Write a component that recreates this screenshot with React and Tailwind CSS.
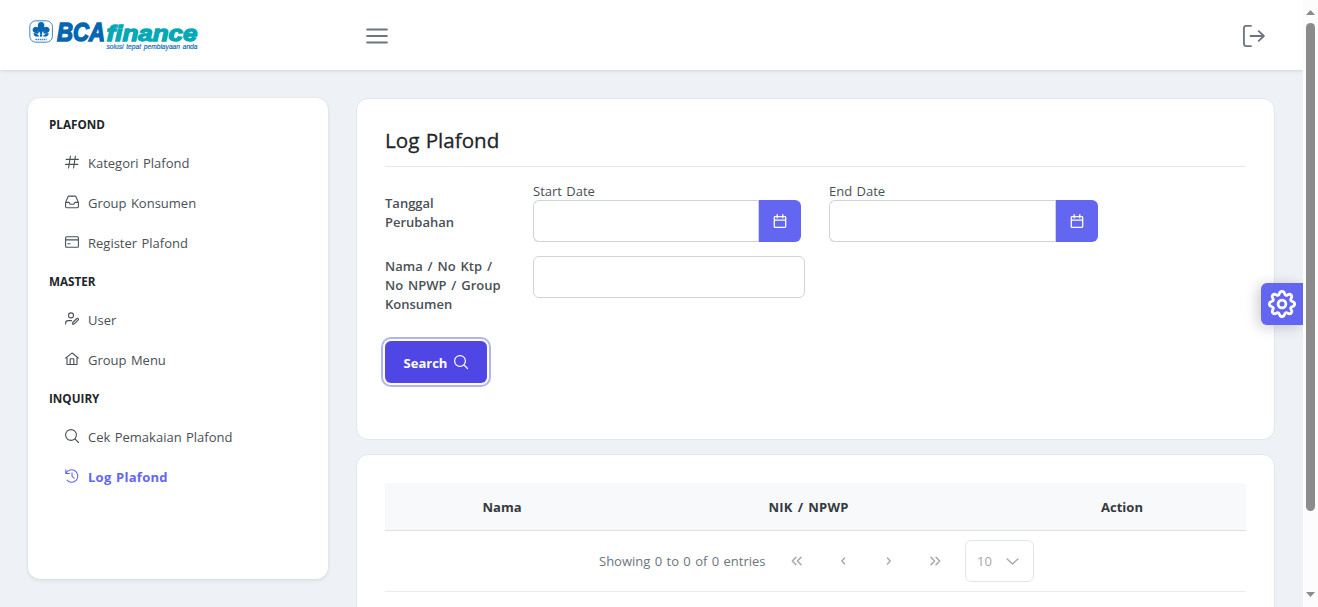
import React from "react";

const ICONS = {
  hash: <path d="M5.4 1 3.6 13M10.4 1 8.6 13M1.2 4.4h12.2M.6 9.4h12.2" />,
  inbox: <path d="M.6 7.4 3 1.7q.3-.6 1-.6h6q.7 0 1 .6l2.4 5.7v4.4q0 .9-.9.9h-11q-.9 0-.9-.9zM.6 7.4h3.6l1 1.9h3.6l1-1.9h3.6" />,
  card: <path d="M1.6 1.8h10.8q1 0 1 1v8.4q0 1-1 1H1.6q-1 0-1-1V2.8q0-1 1-1zM.6 4.9h12.8M2.9 8.8h2.2" />,
  userEdit: (
    <>
      <circle cx="6" cy="3.4" r="2.5" />
      <path d="M.6 12v-.8q0-2.6 2.6-2.6h3.3M7.6 12.3l.2-1.8 4-4q.6-.5 1.2 0l.3.3q.5.6 0 1.1l-4 4z" />
    </>
  ),
  home: <path d="M.6 6.2 6.5 1.3q.5-.4 1 0l5.9 4.9M2 5.3v7.2h10V5.3M5.2 12.3V7.2q0-.5.5-.5h2.6q.5 0 .5.5v5.1" />,
  search: (
    <>
      <circle cx="6" cy="6" r="5.4" />
      <path d="m9.9 9.9 3.6 3.6" />
    </>
  ),
  history: <path d="M.8.8v3.7h3.7M1 4.3A6.2 6.2 0 1 1 2 11.2M7 3.8v3.4l2.1 2" />,
  calendar: <path d="M2.1 2.6h9.8q.8 0 .8.8v9.2q0 .8-.8.8H2.1q-.8 0-.8-.8V3.4q0-.8.8-.8zM1.3 6.2h11.4M4.2.6v3.2M9.8.6v3.2" />,
  signOut: <path d="M5.1.6H2Q.6.6.6 2v10q0 1.4 1.4 1.4h3.1M4.8 7h8.5M10 3.9 13.3 7 10 10.1" />,
  bars: <path d="M.7 2.86h12.6M.7 7h12.6M.7 11.14h12.6" />,
  left: <path d="M8.6 4 5.8 7l2.8 3" />,
  right: <path d="M5.4 4 8.2 7l-2.8 3" />,
  doubleLeft: <path d="M5.9 3.4 2.3 7l3.6 3.6M11 3.4 7.4 7l3.6 3.6" />,
  doubleRight: <path d="m8.1 3.4 3.6 3.6-3.6 3.6M3 3.4 6.6 7 3 10.6" />,
  down: <path d="m1.2 4.2 5.8 5.6 5.8-5.6" />,
};

function Icon({ name, className = "size-[14px]", stroke = 1.1 }) {
  return (
    <svg viewBox="0 0 14 14" className={"shrink-0 overflow-visible " + className} fill="none" stroke="currentColor" strokeWidth={stroke} strokeLinecap="round" strokeLinejoin="round">
      {ICONS[name]}
    </svg>
  );
}

function Logo() {
  return (
    <svg width="172" height="36" viewBox="0 0 172 36" className="mt-[3px] shrink-0 overflow-visible">
      <rect x="0.8" y="1.8" width="22.6" height="21.4" rx="6" fill="#fff" stroke="#3f86c4" strokeWidth="1" />
      <g fill="#0a66b2">
        <ellipse cx="12.1" cy="6.9" rx="3.3" ry="3.9" />
        <ellipse cx="7.4" cy="11.2" rx="3.8" ry="3.2" transform="rotate(25 7.4 11.2)" />
        <ellipse cx="16.8" cy="11.2" rx="3.8" ry="3.2" transform="rotate(-25 16.8 11.2)" />
        <path d="M4.5 14q4 .4 6 3.6h-4q-2-.6-2-3.6zM19.7 14q-4 .4-6 3.6h4q2-.6 2-3.6z" />
        <path d="M11 9h2.2v8.6H11z" />
      </g>
      <path d="M9 12.5l2.6 3M15.2 12.5l-2.6 3" stroke="#fff" strokeWidth=".5" />
      <path d="M6.5 20.4h11.2" stroke="#3f86c4" strokeWidth="1.5" strokeDasharray="1.5 .6" />
      <text x="28" y="22" textLength="48" lengthAdjust="spacingAndGlyphs" fontFamily="Liberation Sans, sans-serif" fontWeight="700" fontStyle="italic" fontSize="25" fill="#0465b1" stroke="#0465b1" strokeWidth="1.4">BCA</text>
      <text x="77.5" y="22" textLength="91" lengthAdjust="spacingAndGlyphs" fontFamily="Liberation Sans, sans-serif" fontWeight="700" fontStyle="italic" fontSize="22" fill="#04a9b5" stroke="#04a9b5" strokeWidth="1.3">finance</text>
      <text x="77.5" y="30" textLength="91" lengthAdjust="spacingAndGlyphs" fontFamily="Liberation Sans, sans-serif" fontStyle="italic" fontSize="7" fill="#0465b1" stroke="#0465b1" strokeWidth=".15">solusi tepat pembiayaan anda</text>
    </svg>
  );
}

const MENU = [
  { title: "PLAFOND", items: [["hash", "Kategori Plafond"], ["inbox", "Group Konsumen"], ["card", "Register Plafond"]] },
  { title: "MASTER", items: [["userEdit", "User"], ["home", "Group Menu"]] },
  { title: "INQUIRY", items: [["search", "Cek Pemakaian Plafond"], ["history", "Log Plafond", true]] },
];

function Sidebar() {
  return (
    <aside className="h-[481px] w-[300px] shrink-0 rounded-xl bg-white px-[21px] pt-2 shadow-[0_3px_5px_rgba(0,0,0,0.02),0_0_2px_rgba(0,0,0,0.05),0_1px_4px_rgba(0,0,0,0.08)]">
      {MENU.map((group) => (
        <section key={group.title}>
          <h2 className="flex h-[37px] items-center text-[11.7px] font-bold text-[#212529]">{group.title}</h2>
          <ul>
            {group.items.map(([icon, label, active]) => (
              <li key={label} className={"flex h-10 items-center gap-[9px] pl-4 " + (active ? "font-bold tracking-[0.25px] text-[#6366f1]" : "text-[#495057]")}>
                <Icon name={icon} className="mb-[2px] size-[14px]" stroke={1.1} />
                <span className="pt-[2px]">{label}</span>
              </li>
            ))}
          </ul>
        </section>
      ))}
    </aside>
  );
}

function DateField({ label, width }) {
  return (
    <div className={width}>
      <label className="block h-[18px] leading-[18px]">{label}</label>
      <div className="flex h-[42px]">
        <input className="min-w-0 flex-1 rounded-l-md border border-r-0 border-[#ced4da] bg-white px-3 outline-none" />
        <button className="flex w-[43px] items-center justify-center rounded-r-md border-l border-[#ced4da] bg-[#6366f1] text-white">
          <Icon name="calendar" stroke={1.3} />
        </button>
      </div>
    </div>
  );
}

function SearchCard() {
  return (
    <section className="h-[342px] rounded-xl border border-[#dfe7ef] bg-white px-7 pt-7">
      <h1 className="flex h-[40px] items-start border-b border-[#dfe7ef] text-[20.6px] leading-[26px] font-medium text-[#212529] [-webkit-text-stroke:0.3px]">Log Plafond</h1>
      <div className="mt-[15px] flex">
        <label className="w-[148px] pt-3 pr-8 leading-[19px] font-semibold">Tanggal Perubahan</label>
        <DateField label="Start Date" width="w-[268px]" />
        <div className="w-7" />
        <DateField label="End Date" width="w-[269px]" />
      </div>
      <div className="mt-[15px] flex items-start">
        <label className="w-[148px] leading-[19px] font-semibold [word-spacing:1.5px]">
          Nama / No Ktp /<br />No NPWP / Group<br />Konsumen
        </label>
        <input className="-mt-px h-[42px] w-[272px] rounded-md border border-[#ced4da] bg-white px-3 outline-none" />
      </div>
      <button className="mt-[27px] flex h-[42px] w-[102px] items-center justify-center gap-[7px] rounded-md bg-[#4f46e5] font-bold text-white shadow-[0_0_0_2px_#fff,0_0_0_4px_#b1b3f8]">
        <span className="pt-[3px]">Search</span>
        <Icon name="search" className="size-[14px]" stroke={1.2} />
      </button>
    </section>
  );
}

function TableCard() {
  return (
    <section className="h-[200px] rounded-xl border border-[#dfe7ef] bg-white px-7 pt-7">
      <div className="grid h-12 grid-cols-[234px_379px_248px] items-center border-b border-[#dee2e6] bg-[#f8f9fb] pt-[2px] text-center font-bold text-[#343a40]">
        <span>Nama</span>
        <span className="tracking-[0.2px] [word-spacing:1.5px]">NIK / NPWP</span>
        <span>Action</span>
      </div>
      <div className="flex h-[61px] items-center border-b border-[#e9ecef] pl-[214px] text-[#6c757d]">
        <span className="w-[175px] pt-[2px] whitespace-nowrap">Showing 0 to 0 of 0 entries</span>
        <div className="flex text-[#a7acb1]">
          {["doubleLeft", "left", "right", "doubleRight"].map((name) => (
            <span key={name} className="flex w-[46px] justify-center">
              <Icon name={name} stroke={1.5} />
            </span>
          ))}
        </div>
        <div className="ml-[7px] flex h-[42px] w-[69px] items-center justify-between rounded-md border border-[#e2e5e9] pr-[14px] pl-[11px] text-[#a4a7ab]">
          <span className="pt-[2px]">10</span>
          <Icon name="down" className="size-[13px]" stroke={1.5} />
        </div>
      </div>
    </section>
  );
}

function Scrollbar() {
  return (
    <div className="flex w-[15px] shrink-0 flex-col items-center bg-[#fcfcfc] pt-[10px]">
      <svg width="9" height="5" className="shrink-0"><path d="M0 5 4.5 0 9 5z" fill="#8b8b8b" /></svg>
      <div className="mt-2 h-[488px] w-[9px] shrink-0 rounded-full bg-[#8b8b8b]" />
      <svg width="9" height="5" className="mt-auto mb-[10px] shrink-0"><path d="M0 0h9L4.5 5z" fill="#8b8b8b" /></svg>
    </div>
  );
}

export default function App() {
  return (
    <div className="flex h-[607px] w-[1318px] overflow-hidden bg-[#eef2f7] font-['Open_Sans','Noto_Sans',sans-serif] text-[13px] text-[#495057] [word-spacing:1px]">
      <div className="relative flex min-w-0 flex-1 flex-col overflow-hidden">
        <header className="flex h-[70px] shrink-0 items-center bg-white pl-[29px] text-[#6c757d] shadow-[0_3px_5px_rgba(0,0,0,0.02),0_0_2px_rgba(0,0,0,0.05),0_1px_4px_rgba(0,0,0,0.08)]">
          <Logo />
          <Icon name="bars" className="mt-[2px] ml-[165px] size-[22px]" stroke={1.15} />
          <Icon name="signOut" className="mt-[2px] mr-[38px] ml-auto size-[22px]" stroke={1.15} />
        </header>
        <div className="flex gap-7 pt-7 pl-7">
          <Sidebar />
          <main className="flex w-[919px] flex-col gap-[14px]">
            <SearchCard />
            <TableCard />
          </main>
        </div>
        <button className="absolute top-[283px] right-0 flex h-[42px] w-[42px] items-center justify-center rounded-l-md bg-[#6366f1] text-white shadow-[-3px_2px_14px_rgba(0,0,0,0.2)]">
          <svg width="28" height="28" viewBox="0 0 28 28" fill="none" stroke="currentColor" strokeWidth="2.8" strokeLinejoin="round">
            <path d="M11.3 3.8Q12 1.3 14 1.3T16.7 3.8Q17.5 6 19.6 4.9Q21.8 3.5 23.1 4.9T23.1 8.4Q22 10.5 24.2 11.3Q26.7 12 26.7 14T24.2 16.7Q22 17.5 23.1 19.6Q24.5 21.8 23.1 23.1T19.6 23.1Q17.5 22 16.7 24.2Q16 26.7 14 26.7T11.3 24.2Q10.5 22 8.4 23.1Q6.2 24.5 4.9 23.1T4.9 19.6Q6 17.5 3.8 16.7Q1.3 16 1.3 14T3.8 11.3Q6 10.5 4.9 8.4Q3.5 6.2 4.9 4.9T8.4 4.9Q10.5 6 11.3 3.8Z" />
            <circle cx="14" cy="14" r="3.9" />
          </svg>
        </button>
      </div>
      <Scrollbar />
    </div>
  );
}
